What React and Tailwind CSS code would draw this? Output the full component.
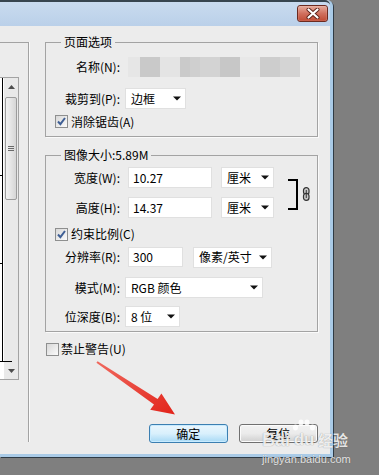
import React from "react";

function Arrow() {
  return (
    <svg width="8" height="5" viewBox="0 0 8 5" className="shrink-0">
      <path d="M0 0.5 H8 L4 4.5 Z" fill="#111" />
    </svg>
  );
}

function Select({ className, children }) {
  return (
    <div
      className={
        "h-[21px] bg-white border border-[#e0e0e0] flex items-center justify-between pl-[5px] pr-[4px] " +
        className
      }
    >
      <span>{children}</span>
      <Arrow />
    </div>
  );
}

function Check({ checked }) {
  return (
    <span className="w-[13px] h-[13px] shrink-0 border border-[#8e8f8f] bg-gradient-to-br from-[#d8d8d8] to-[#fbfbfb] flex items-center justify-center">
      {checked && (
        <svg width="11" height="11" viewBox="0 0 11 11">
          <path d="M2 5.5 L4.4 8.2 L9 2" fill="none" stroke="#3f5f95" strokeWidth="2" />
        </svg>
      )}
    </span>
  );
}

function Label({ children, className = "" }) {
  return <span className={"w-[74px] shrink-0 text-right " + className}>{children}</span>;
}

function CloseBtn() {
  return (
    <div className="w-[31px] h-[17px] rounded-[3px] border border-[#6c2a20] bg-gradient-to-b from-[#e6ab9c] via-[#d0705e] to-[#c04a33] flex items-center justify-center shadow-[inset_0_0_1px_#fff]">
      <svg width="14" height="11" viewBox="0 0 14 11">
        <path d="M2.5 1.5 L11.5 9.5 M11.5 1.5 L2.5 9.5" stroke="#5a2018" strokeWidth="4" strokeLinecap="round" />
        <path d="M2.5 1.5 L11.5 9.5 M11.5 1.5 L2.5 9.5" stroke="#fff" strokeWidth="2.2" strokeLinecap="round" />
      </svg>
    </div>
  );
}

function LeftPanel() {
  return (
    <div className="w-[29px] shrink-0 pt-[16px]">
      <div className="h-[400px] border-t border-r border-[#a3a3a3] pt-[34px] shadow-[1px_0_0_#fafafa]">
        <div className="w-[19px] h-[303px] border-t border-r border-b border-[#a3a3a3] bg-white flex">
          <div className="relative w-[4px]">
            <div className="absolute left-[2px] top-0 w-[1px] h-[284px] bg-black" />
            <div className="absolute left-0 top-[97px] w-[3px] h-[1px] bg-black" />
            <div className="absolute left-0 top-[185px] w-[3px] h-[1px] bg-black" />
            <div className="absolute left-0 top-[283px] w-[12px] h-[1px] bg-black" />
          </div>
          <div className="w-[14px] bg-[#e9e9e9] flex flex-col">
            <div className="h-[17px] flex items-center justify-center">
              <svg width="7" height="4" viewBox="0 0 7 4">
                <path d="M0 4 L3.5 0 L7 4 Z" fill="#4d4d4d" />
              </svg>
            </div>
            <div className="mt-[2px] mx-[1px] h-[103px] rounded-[2px] border border-[#9c9c9c] bg-gradient-to-r from-[#f3f3f3] to-[#d6d6d6] flex flex-col items-center justify-center gap-[1px]">
              <div className="w-[6px] h-[1px] bg-[#6a6a6a]" />
              <div className="w-[6px] h-[1px] bg-[#6a6a6a]" />
              <div className="w-[6px] h-[1px] bg-[#6a6a6a]" />
            </div>
            <div className="flex-1" />
            <div className="h-[17px] flex items-center justify-center">
              <svg width="7" height="4" viewBox="0 0 7 4">
                <path d="M0 0 L3.5 4 L7 0 Z" fill="#4d4d4d" />
              </svg>
            </div>
          </div>
        </div>
      </div>
    </div>
  );
}

function Group({ title, className, children }) {
  return (
    <div className={"relative border border-[#a3a3a3] shadow-[1px_1px_0_#fafafa] " + className}>
      <span className="absolute left-[15px] top-[-8px] px-[3px] bg-[#ececec]">{title}</span>
      {children}
    </div>
  );
}

function BlurName() {
  const blocks = [
    ["w-[12px]", "bg-[#e6e6e6]"],
    ["w-[20px]", "bg-[#c9c9c9]"],
    ["w-[20px]", "bg-[#e4e4e4]"],
    ["w-[10px]", "bg-[#cacaca]"],
    ["w-[10px]", "bg-[#cfcfcf]"],
    ["w-[20px]", "bg-[#d3d3d3]"],
    ["w-[20px]", "bg-[#c7c7c7]"],
    ["w-[20px]", "bg-[#e8e8e8]"],
    ["w-[20px]", "bg-[#cdcdcd]"],
    ["w-[20px]", "bg-[#d4d4d4]"],
  ];
  return (
    <div className="ml-[8px] h-[20px] flex">
      {blocks.map(([w, c], i) => (
        <div key={i} className={w + " h-[20px] " + c} />
      ))}
    </div>
  );
}

function RightPanel() {
  return (
    <div className="ml-[16px] w-[273px] pt-[16px] flex flex-col">
      <Group title="页面选项" className="h-[95px] pt-[14px]">
        <div className="flex items-center h-[20px]">
          <Label>名称(N):</Label>
          <BlurName />
        </div>
        <div className="mt-[11px] flex items-center h-[21px]">
          <Label>裁剪到(P):</Label>
          <Select className="ml-[5px] w-[61px]">边框</Select>
        </div>
        <div className="mt-[6px] flex items-center h-[13px] pl-[9px] gap-[3px]">
          <Check checked />
          <span>消除锯齿(A)</span>
        </div>
      </Group>

      <Group title="图像大小:5.89M" className="mt-[18px] h-[177px] pt-[11px]">
        <div className="flex">
          <div className="flex flex-col gap-[9px]">
            <div className="flex items-center h-[21px]">
              <Label>宽度(W):</Label>
              <div className="ml-[8px] w-[84px] h-[21px] bg-white border border-[#e0e0e0] pl-[4px] flex items-center">10.27</div>
              <Select className="ml-[9px] w-[53px]">厘米</Select>
            </div>
            <div className="flex items-center h-[21px]">
              <Label>高度(H):</Label>
              <div className="ml-[8px] w-[84px] h-[21px] bg-white border border-[#e0e0e0] pl-[4px] flex items-center">14.37</div>
              <Select className="ml-[9px] w-[53px]">厘米</Select>
            </div>
          </div>
          <div className="ml-[14px] mt-[12px] w-[10px] h-[31px] border-t-2 border-r-2 border-b-2 border-black" />
          <svg width="9" height="14" viewBox="0 0 9 14" className="ml-[4px] mt-[20px]">
            <rect x="1.5" y="0.7" width="5.5" height="7" rx="2.6" fill="#c9c9c9" stroke="#333" strokeWidth="1.2" />
            <rect x="1.5" y="6.3" width="5.5" height="7" rx="2.6" fill="#c9c9c9" stroke="#333" strokeWidth="1.2" />
            <path d="M4.25 3 V11" stroke="#333" strokeWidth="1" />
          </svg>
        </div>
        <div className="mt-[10px] flex items-center h-[12px] pl-[9px] gap-[3px]">
          <Check checked />
          <span>约束比例(C)</span>
        </div>
        <div className="mt-[7px] flex items-center h-[20px]">
          <Label>分辨率(R):</Label>
          <div className="ml-[8px] w-[55px] h-[20px] bg-white border border-[#e0e0e0] pl-[4px] flex items-center">300</div>
          <Select className="ml-[10px] w-[79px]">像素/英寸</Select>
        </div>
        <div className="mt-[10px] flex items-center h-[21px]">
          <Label>模式(M):</Label>
          <Select className="ml-[5px] w-[138px]">RGB 颜色</Select>
        </div>
        <div className="mt-[8px] flex items-center h-[21px]">
          <Label>位深度(B):</Label>
          <Select className="ml-[5px] w-[55px]">8 位</Select>
        </div>
      </Group>

      <div className="mt-[11px] flex items-center h-[12px] pl-[1px] gap-[2px]">
        <Check />
        <span>禁止警告(U)</span>
      </div>

      <div className="mt-[69px] flex pl-[104px] gap-[11px]">
        <div className="w-[79px] h-[19px] rounded-[3px] border border-[#3c7fb1] bg-gradient-to-b from-[#eaf6fd] via-[#d9f0fc] to-[#a7d9f5] shadow-[inset_0_0_0_1px_#c8ebff] flex items-center justify-center">
          确定
        </div>
        <div className="w-[80px] h-[19px] rounded-[3px] border border-[#707070] bg-gradient-to-b from-[#f2f2f2] via-[#ebebeb] to-[#cfcfcf] shadow-[inset_0_0_0_1px_#fbfbfb] flex items-center justify-center">
          复位
        </div>
      </div>
    </div>
  );
}

function RedArrow() {
  return (
    <svg width="379" height="475" className="absolute left-0 top-0 pointer-events-none">
      <defs>
        <linearGradient id="ra" x1="0" y1="0" x2="1" y2="1">
          <stop offset="0" stopColor="#f06a5f" />
          <stop offset="1" stopColor="#e2231a" />
        </linearGradient>
      </defs>
      <polygon
        points="97.6,361.2 157.6,399 161.4,393.6 175,414.5 150.2,409.8 154,404.4 96.4,362.8"
        fill="url(#ra)"
      />
    </svg>
  );
}

function Watermark() {
  return (
    <div className="absolute left-[262px] top-[419px] pointer-events-none text-white/85 [text-shadow:0_0_1px_rgba(0,0,0,0.45)]">
      <div className="flex items-end h-[29px]">
        <span className="font-['Liberation_Sans',sans-serif] font-bold text-[18px] leading-[16px]">Bai</span>
        <div className="relative w-[28px] h-[29px] flex items-end justify-center">
          <svg width="26" height="13" viewBox="0 0 26 13" className="absolute left-[1px] top-0">
            <ellipse cx="4.5" cy="8.5" rx="2.5" ry="3" fill="rgba(255,255,255,0.85)" />
            <ellipse cx="10" cy="3.5" rx="2.5" ry="3" fill="rgba(255,255,255,0.85)" />
            <ellipse cx="16" cy="3.5" rx="2.5" ry="3" fill="rgba(255,255,255,0.85)" />
            <ellipse cx="21.5" cy="8.5" rx="2.5" ry="3" fill="rgba(255,255,255,0.85)" />
          </svg>
          <span className="font-['Liberation_Sans',sans-serif] font-bold text-[17px] leading-[16px]">du</span>
        </div>
        <span className="text-[15px] leading-[16px] font-bold">经验</span>
      </div>
      <div className="mt-[5px] font-['Liberation_Sans',sans-serif] text-[11px] leading-[12px]">jingyan.baidu.com</div>
    </div>
  );
}

export default function App() {
  return (
    <div className="relative w-[379px] h-[475px] bg-[#7f7f7f] overflow-hidden font-['Noto_Sans_CJK_SC',sans-serif] text-[12px] leading-[14px] text-black">
      <div className="w-[333px] h-[457px] bg-[#ececec] border-r-[3px] border-b-[3px] border-[#aacbe7] shadow-[1px_1px_0_#2f3b45] rounded-tr-[6px] flex flex-col">
        <div className="h-[26px] shrink-0 border-t-2 border-[#37454f] bg-gradient-to-b from-[#c9dbef] to-[#bad0e9] rounded-tr-[5px] flex justify-end items-start pr-[2px] pt-[3px]">
          <CloseBtn />
        </div>
        <div className="flex flex-1">
          <LeftPanel />
          <RightPanel />
        </div>
      </div>
      <RedArrow />
      <Watermark />
    </div>
  );
}
